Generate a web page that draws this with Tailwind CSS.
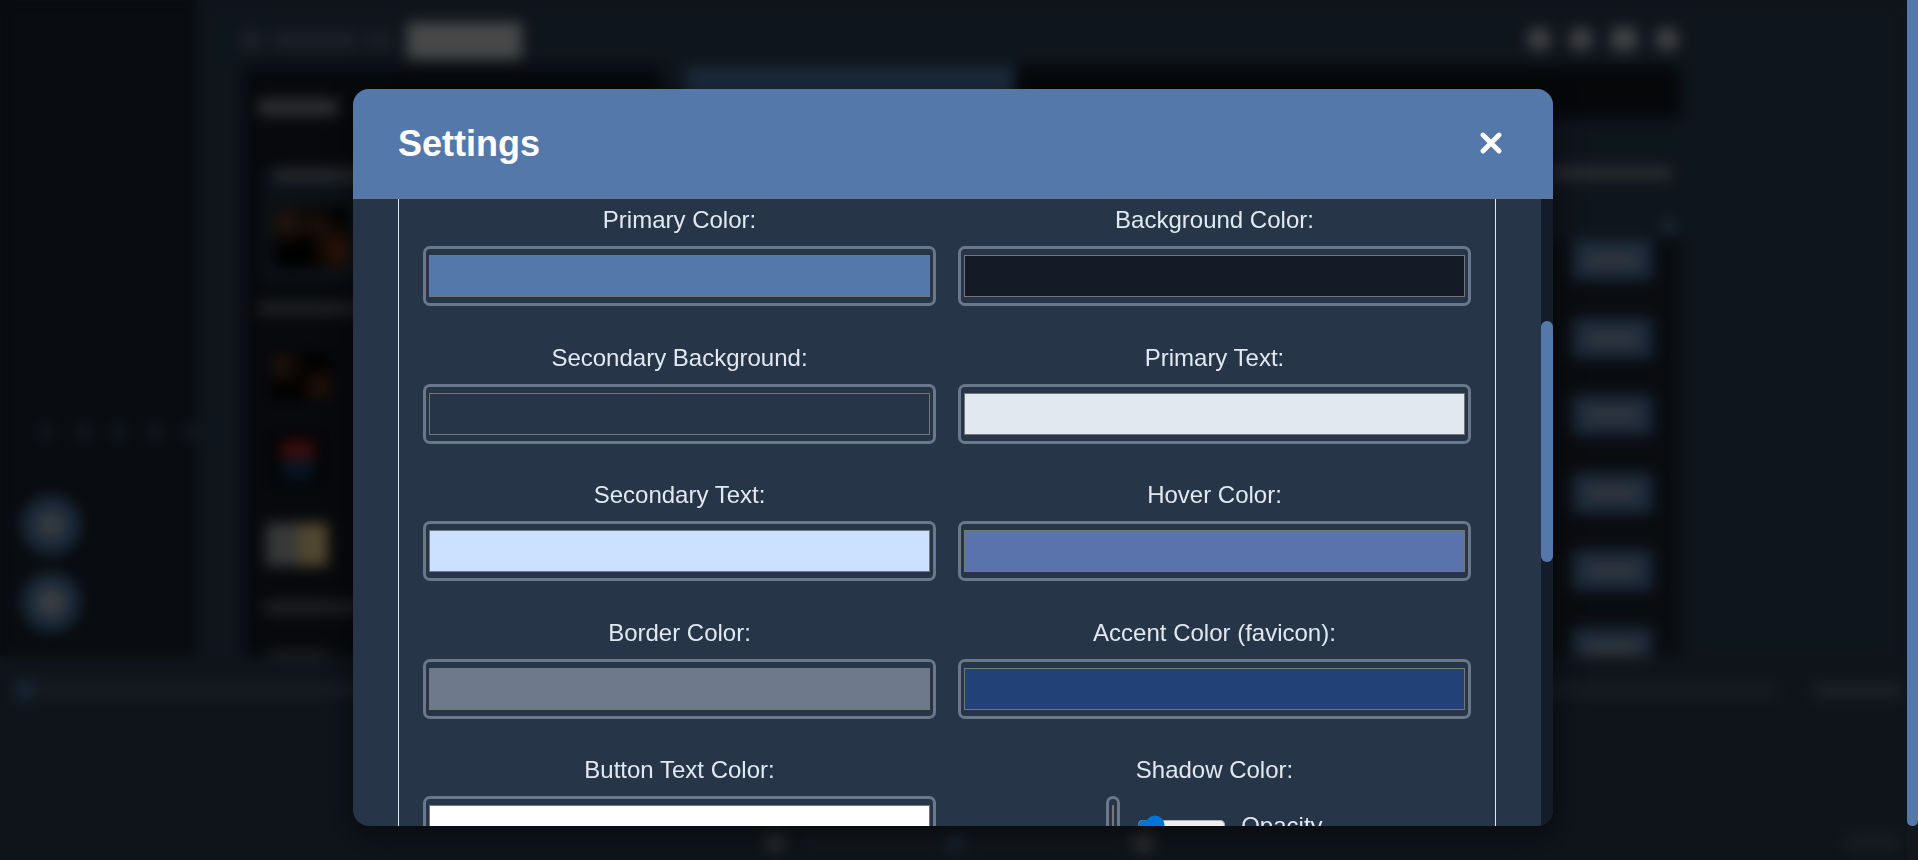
<!DOCTYPE html>
<html lang="en">
<head>
  <meta charset="UTF-8">
  <title>Settings</title>
  <script src="https://cdn.jsdelivr.net/npm/@tailwindcss/browser@4"></script>
</head>
<body class="bg-[#1e2a38] font-['Liberation_Sans',Arial,sans-serif]">

<div class="flex w-[1918px] h-[860px] overflow-hidden">

  <!-- page, sits behind the blurred overlay -->
  <div class="relative flex-1 min-w-0">
    <div class="flex flex-col h-full bg-[#1e2a38]" aria-hidden="true">
      <div class="flex h-[656px]">

        <!-- left rail -->
        <aside class="w-[197px] shrink-0 bg-[#121820] flex flex-col items-start">
          <div class="flex gap-[16px] pl-[37px] pt-[422px]">
            <span class="w-[20px] h-[20px] rounded-full bg-[#222d3c]"></span>
            <span class="w-[20px] h-[20px] rounded-full bg-[#222d3c]"></span>
            <span class="w-[20px] h-[20px] rounded-full bg-[#222d3c]"></span>
            <span class="w-[20px] h-[20px] rounded-full bg-[#222d3c]"></span>
            <span class="w-[20px] h-[20px] rounded-full bg-[#222d3c]"></span>
          </div>
          <span class="w-[60px] h-[60px] rounded-full bg-[#33506f] ml-[21px] mt-[53px] flex items-center justify-center"><span class="w-[28px] h-[28px] rounded-full bg-[#6a7480]"></span></span>
          <span class="w-[60px] h-[60px] rounded-full bg-[#33506f] ml-[21px] mt-[17px] flex items-center justify-center"><span class="w-[30px] h-[30px] rounded-full bg-[#727b86]"></span></span>
        </aside>

        <div class="flex-1 min-w-0 flex flex-col">
          <!-- top bar -->
          <header class="h-[67px] shrink-0 flex items-center pt-[13px] pl-[43px] pr-[228px]">
            <span class="w-[22px] h-[22px] rounded-full bg-[#3a4454]"></span>
            <span class="w-[85px] h-[14px] ml-[10px] rounded-sm bg-[#3a4454]"></span>
            <span class="w-[27px] h-[12px] ml-[8px] rounded-sm bg-[#3a4454]"></span>
            <span class="w-[115px] h-[37px] ml-[15px] rounded bg-[#909090]"></span>
            <div class="ml-auto flex gap-[18px] -mt-[3px]">
              <span class="w-[24px] h-[24px] rounded-full bg-[#808286]"></span>
              <span class="w-[24px] h-[24px] rounded-full bg-[#808286]"></span>
              <span class="w-[26px] h-[24px] rounded bg-[#808286]"></span>
              <span class="w-[24px] h-[24px] rounded-full bg-[#808286]"></span>
            </div>
          </header>

          <div class="flex h-[589px] pl-[46px] pr-[227px] gap-[25px]">
            <!-- left panel -->
            <section class="w-[417px] shrink-0 bg-[#0e1219] pl-[15px] pt-[32px]">
              <div class="w-[80px] h-[17px] rounded-sm bg-[#5a5c60]"></div>
              <div class="mt-[52px] ml-[4px] bg-[#1a2430] pl-[11px] pb-[14px]">
                <div class="w-[110px] h-[14px] rounded-sm bg-[#4a4e58]"></div>
                <div class="mt-[25px] w-[76px] h-[61px] bg-black bg-[radial-gradient(circle_at_18%_25%,#553424_0,transparent_34%),radial-gradient(circle_at_60%_30%,#482a1c_0,transparent_34%),radial-gradient(circle_at_88%_72%,#6e3218_0,transparent_38%)]"></div>
              </div>
              <div class="mt-[20px] w-[120px] h-[13px] rounded-sm bg-[#404248]"></div>
              <div class="mt-[39px] ml-[12px] w-[60px] h-[45px] bg-black bg-[radial-gradient(circle_at_20%_25%,#4c2e1e_0,transparent_40%),radial-gradient(circle_at_85%_75%,#562a16_0,transparent_40%)]"></div>
              <div class="mt-[36px] ml-[14px] w-[52px] h-[49px] bg-black flex flex-col items-center justify-center"><span class="w-[36px] h-[20px] bg-[#6a1c20]"></span><span class="w-[36px] h-[20px] bg-[#0e2a46]"></span></div>
              <div class="mt-[39px] ml-[8px] w-[62px] h-[43px] bg-[linear-gradient(90deg,#6c7072_0,#72726e_48%,#a08c64_55%,#a8925a_100%)]"></div>
              <div class="mt-[35px] ml-[5px] w-[110px] h-[13px] rounded-sm bg-[#3e4046]"></div>
              <div class="mt-[37px] ml-[11px] w-[60px] h-[14px] rounded-sm bg-[#4e4a40]"></div>
            </section>

            <!-- right panel -->
            <section class="flex-1 min-w-0 flex flex-col">
              <div class="h-[51px] shrink-0 flex bg-[#0c0e13]">
                <span class="w-[330px] ml-[0px] bg-[#385476]"></span>
              </div>
              <div class="h-[122px] shrink-0 flex flex-col items-end pr-[8px]">
                <span class="mt-[48px] w-[122px] h-[14px] rounded-sm bg-[#50525a]"></span>
                <span class="mt-[38px] -mr-[4px] w-[14px] h-[14px] rounded-full bg-[#385476]"></span>
              </div>
              <div class="flex-1 min-h-0 overflow-hidden bg-[#141920] flex flex-col items-end pr-[28px] gap-[37.5px]">
                <span class="shrink-0 w-[80px] h-[40px] rounded bg-[#385476] flex items-center justify-center"><span class="w-[52px] h-[16px] bg-[#5f6a78]"></span></span>
                <span class="shrink-0 w-[80px] h-[40px] rounded bg-[#385476] flex items-center justify-center"><span class="w-[52px] h-[16px] bg-[#5f6a78]"></span></span>
                <span class="shrink-0 w-[80px] h-[40px] rounded bg-[#385476] flex items-center justify-center"><span class="w-[52px] h-[16px] bg-[#5f6a78]"></span></span>
                <span class="shrink-0 w-[80px] h-[40px] rounded bg-[#385476] flex items-center justify-center"><span class="w-[52px] h-[16px] bg-[#5f6a78]"></span></span>
                <span class="shrink-0 w-[80px] h-[40px] rounded bg-[#385476] flex items-center justify-center"><span class="w-[52px] h-[16px] bg-[#5f6a78]"></span></span>
                <span class="shrink-0 w-[80px] h-[40px] rounded bg-[#385476] flex items-center justify-center"><span class="w-[52px] h-[16px] bg-[#5f6a78]"></span></span>
              </div>
            </section>
          </div>
        </div>
      </div>

      <!-- player bar -->
      <footer class="flex-1 bg-[#1f2935] flex flex-col">
        <div class="flex items-center pl-[15px] pt-[24px]">
          <span class="w-[20px] h-[20px] rounded-full bg-[#2e4e72]"></span>
          <span class="w-[1740px] h-[10px] bg-[#363c48]"></span>
          <span class="w-[85px] h-[13px] ml-[40px] rounded-sm bg-[#3c4654]"></span>
        </div>
        <div class="flex items-center pl-[765px] pt-[132px]">
          <span class="w-[20px] h-[20px] rounded-full bg-[#585a60]"></span>
          <span class="w-[160px] h-[5px] ml-[16px] bg-[#343a44]"></span>
          <span class="w-[20px] h-[20px] ml-[-16px] rounded-full bg-[#2e4660]"></span>
          <span class="w-[160px] h-[5px] bg-[#343a44]"></span>
          <span class="w-[24px] h-[20px] ml-[6px] rounded-full bg-[#585a60]"></span>
          <span class="w-[54px] h-[13px] ml-[690px] rounded-sm bg-[#343c48]"></span>
        </div>
      </footer>
    </div>

    <!-- overlay + modal -->
    <div class="absolute inset-0 bg-black/50 backdrop-blur-[7px] flex justify-center pt-[89px] pr-[1px]">
      <div class="w-[1200px] h-[737px] shrink-0 rounded-[16px] overflow-hidden flex flex-col bg-[#263548] shadow-[0_8px_32px_rgba(0,0,0,0.5)]">

        <div class="h-[110px] shrink-0 flex items-center justify-between pl-[45px] pr-[51px] bg-[#5578ab] border-b border-[#6b788c]">
          <h2 class="text-[36px] font-bold text-white">Settings</h2>
          <button aria-label="Close" class="mb-[2px]">
            <svg class="block" width="22" height="22" viewBox="0 0 22 22" fill="none" stroke="#fff" stroke-width="4.8" stroke-linecap="round"><path d="M3 3l16 16M19 3L3 19"/></svg>
          </button>
        </div>

        <div class="flex-1 min-h-0 flex">
          <div class="flex-1 min-w-0 overflow-hidden px-[45px]">
            <div class="border-x border-[#e2e8f0] px-[24px] pt-[7px] h-full">
              <div class="grid grid-cols-2 gap-x-[22px] gap-y-[37.6px] text-[#e2e8f0] text-[24px] leading-[28px] text-center">

                <div>
                  <label class="block mb-[12px]">Primary Color:</label>
                  <input type="color" value="#5578ab" class="block w-full h-[60px] p-0 bg-transparent rounded-[7px] border-[3px] border-[#6b788c] [&::-webkit-color-swatch-wrapper]:py-[6px] [&::-webkit-color-swatch-wrapper]:px-[3px] [&::-webkit-color-swatch]:border-[#767676]">
                </div>
                <div>
                  <label class="block mb-[12px]">Background Color:</label>
                  <input type="color" value="#141b27" class="block w-full h-[60px] p-0 bg-transparent rounded-[7px] border-[3px] border-[#6b788c] [&::-webkit-color-swatch-wrapper]:py-[6px] [&::-webkit-color-swatch-wrapper]:px-[3px] [&::-webkit-color-swatch]:border-[#767676]">
                </div>
                <div>
                  <label class="block mb-[12px]">Secondary Background:</label>
                  <input type="color" value="#263548" class="block w-full h-[60px] p-0 bg-transparent rounded-[7px] border-[3px] border-[#6b788c] [&::-webkit-color-swatch-wrapper]:py-[6px] [&::-webkit-color-swatch-wrapper]:px-[3px] [&::-webkit-color-swatch]:border-[#767676]">
                </div>
                <div>
                  <label class="block mb-[12px]">Primary Text:</label>
                  <input type="color" value="#e2e8f0" class="block w-full h-[60px] p-0 bg-transparent rounded-[7px] border-[3px] border-[#6b788c] [&::-webkit-color-swatch-wrapper]:py-[6px] [&::-webkit-color-swatch-wrapper]:px-[3px] [&::-webkit-color-swatch]:border-[#767676]">
                </div>
                <div>
                  <label class="block mb-[12px]">Secondary Text:</label>
                  <input type="color" value="#cce0ff" class="block w-full h-[60px] p-0 bg-transparent rounded-[7px] border-[3px] border-[#6b788c] [&::-webkit-color-swatch-wrapper]:py-[6px] [&::-webkit-color-swatch-wrapper]:px-[3px] [&::-webkit-color-swatch]:border-[#767676]">
                </div>
                <div>
                  <label class="block mb-[12px]">Hover Color:</label>
                  <input type="color" value="#5a73ad" class="block w-full h-[60px] p-0 bg-transparent rounded-[7px] border-[3px] border-[#6b788c] [&::-webkit-color-swatch-wrapper]:py-[6px] [&::-webkit-color-swatch-wrapper]:px-[3px] [&::-webkit-color-swatch]:border-[#767676]">
                </div>
                <div>
                  <label class="block mb-[12px]">Border Color:</label>
                  <input type="color" value="#6e7a8c" class="block w-full h-[60px] p-0 bg-transparent rounded-[7px] border-[3px] border-[#6b788c] [&::-webkit-color-swatch-wrapper]:py-[6px] [&::-webkit-color-swatch-wrapper]:px-[3px] [&::-webkit-color-swatch]:border-[#767676]">
                </div>
                <div>
                  <label class="block mb-[12px]">Accent Color (favicon):</label>
                  <input type="color" value="#224177" class="block w-full h-[60px] p-0 bg-transparent rounded-[7px] border-[3px] border-[#6b788c] [&::-webkit-color-swatch-wrapper]:py-[6px] [&::-webkit-color-swatch-wrapper]:px-[3px] [&::-webkit-color-swatch]:border-[#767676]">
                </div>
                <div>
                  <label class="block mb-[12px]">Button Text Color:</label>
                  <input type="color" value="#ffffff" class="block w-full h-[60px] p-0 bg-transparent rounded-[7px] border-[3px] border-[#6b788c] [&::-webkit-color-swatch-wrapper]:py-[6px] [&::-webkit-color-swatch-wrapper]:px-[3px] [&::-webkit-color-swatch]:border-[#767676]">
                </div>
                <div>
                  <label class="block mb-[12px]">Shadow Color:</label>
                  <div class="flex items-center justify-center h-[60px]">
                    <input type="color" value="#000000" class="block w-[14px] h-[60px] p-0 bg-transparent rounded-[7px] border-[3px] border-[#6b788c] [&::-webkit-color-swatch-wrapper]:py-[6px] [&::-webkit-color-swatch-wrapper]:px-[3px] [&::-webkit-color-swatch]:border-[#767676]">
                    <input type="range" min="0" max="100" value="12" class="ml-[13px] mb-[3px] w-[71.6px] [zoom:1.25] accent-[#0075d8]">
                    <span class="ml-[15px]">Opacity</span>
                  </div>
                </div>

              </div>
            </div>
          </div>
          <!-- modal scrollbar -->
          <div class="w-[12px] shrink-0 bg-[#141c29]">
            <div class="mt-[122px] h-[241px] rounded-[6px] bg-[#5578ab]"></div>
          </div>
        </div>
      </div>
    </div>
  </div>

  <!-- page scrollbar -->
  <div class="w-[11px] shrink-0 bg-[#12171f]">
    <div class="h-[826px] rounded-b-[6px] bg-[#5578ab]"></div>
  </div>
</div>

</body>
</html>
